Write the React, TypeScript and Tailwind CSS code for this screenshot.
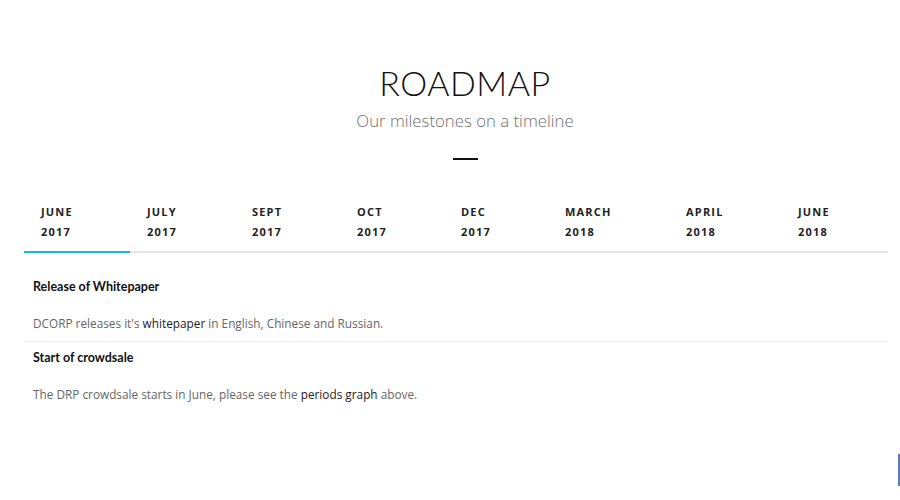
import React from "react";

const tabs = [
  { m: "JUNE", y: "2017", w: "w-[106px]" },
  { m: "JULY", y: "2017", w: "w-[105px]" },
  { m: "SEPT", y: "2017", w: "w-[105px]" },
  { m: "OCT", y: "2017", w: "w-[104px]" },
  { m: "DEC", y: "2017", w: "w-[104px]" },
  { m: "MARCH", y: "2018", w: "w-[121px]" },
  { m: "APRIL", y: "2018", w: "w-[112px]" },
  { m: "JUNE", y: "2018", w: "w-[107px]" },
];

export default function App() {
  return (
    <div className="relative w-[900px] h-[500px] bg-white overflow-hidden">
      <div className="flex flex-col items-center pt-[63px] pl-[30px]">
        <h1 className="text-[34px] leading-[40px] font-light text-[#111] tracking-[0.5px] [font-family:Lato,'Open_Sans',sans-serif]">
          ROADMAP
        </h1>
        <p className="mt-[6px] text-[16.8px] leading-[24px] font-light text-[#6f6f6f] [font-family:'Open_Sans',sans-serif]">
          Our milestones on a timeline
        </p>
        <div className="mt-[25px] w-[25px] h-[2px] bg-[#111]" />
      </div>

      <div className="ml-[24px] w-[864px] mt-[42px]">
        <div className="flex border-b-2 border-[#e6e6e6]">
          {tabs.map((t, i) => (
            <div
              key={i}
              className={`${t.w} shrink-0 relative pl-[17px] pb-[9px] [font-family:'Open_Sans',sans-serif] text-[11px] font-bold tracking-[1.2px] text-[#222]`}
            >
              <div className="leading-[20px]">{t.m}</div>
              <div className="leading-[20px]">{t.y}</div>
              {i === 0 && (
                <div className="absolute left-0 right-0 bottom-[-2px] h-[2px] bg-[#14b8e6]" />
              )}
            </div>
          ))}
        </div>

        <div className="pl-[9px] pt-[26px] pb-[9px] border-b border-[#f0f0f0]">
          <h3 className="text-[12.5px] leading-[16px] font-bold text-[#111] [font-family:Lato,sans-serif]">
            Release of Whitepaper
          </h3>
          <p className="mt-[19px] text-[11.8px] leading-[18px] text-[#666] [font-family:'Open_Sans',sans-serif]">
            DCORP releases it's <span className="text-[#222]">whitepaper</span> in English, Chinese and Russian.
          </p>
        </div>

        <div className="pl-[9px] pt-[8px]">
          <h3 className="text-[12.5px] leading-[16px] font-bold text-[#111] [font-family:Lato,sans-serif]">
            Start of crowdsale
          </h3>
          <p className="mt-[19px] text-[11.8px] leading-[18px] text-[#666] [font-family:'Open_Sans',sans-serif]">
            The DRP crowdsale starts in June, please see the <span className="text-[#222]">periods graph</span> above.
          </p>
        </div>
      </div>

      <div className="absolute left-[898px] top-[454px] w-[2px] h-[32px] bg-[#5b7bb5]" />
    </div>
  );
}
